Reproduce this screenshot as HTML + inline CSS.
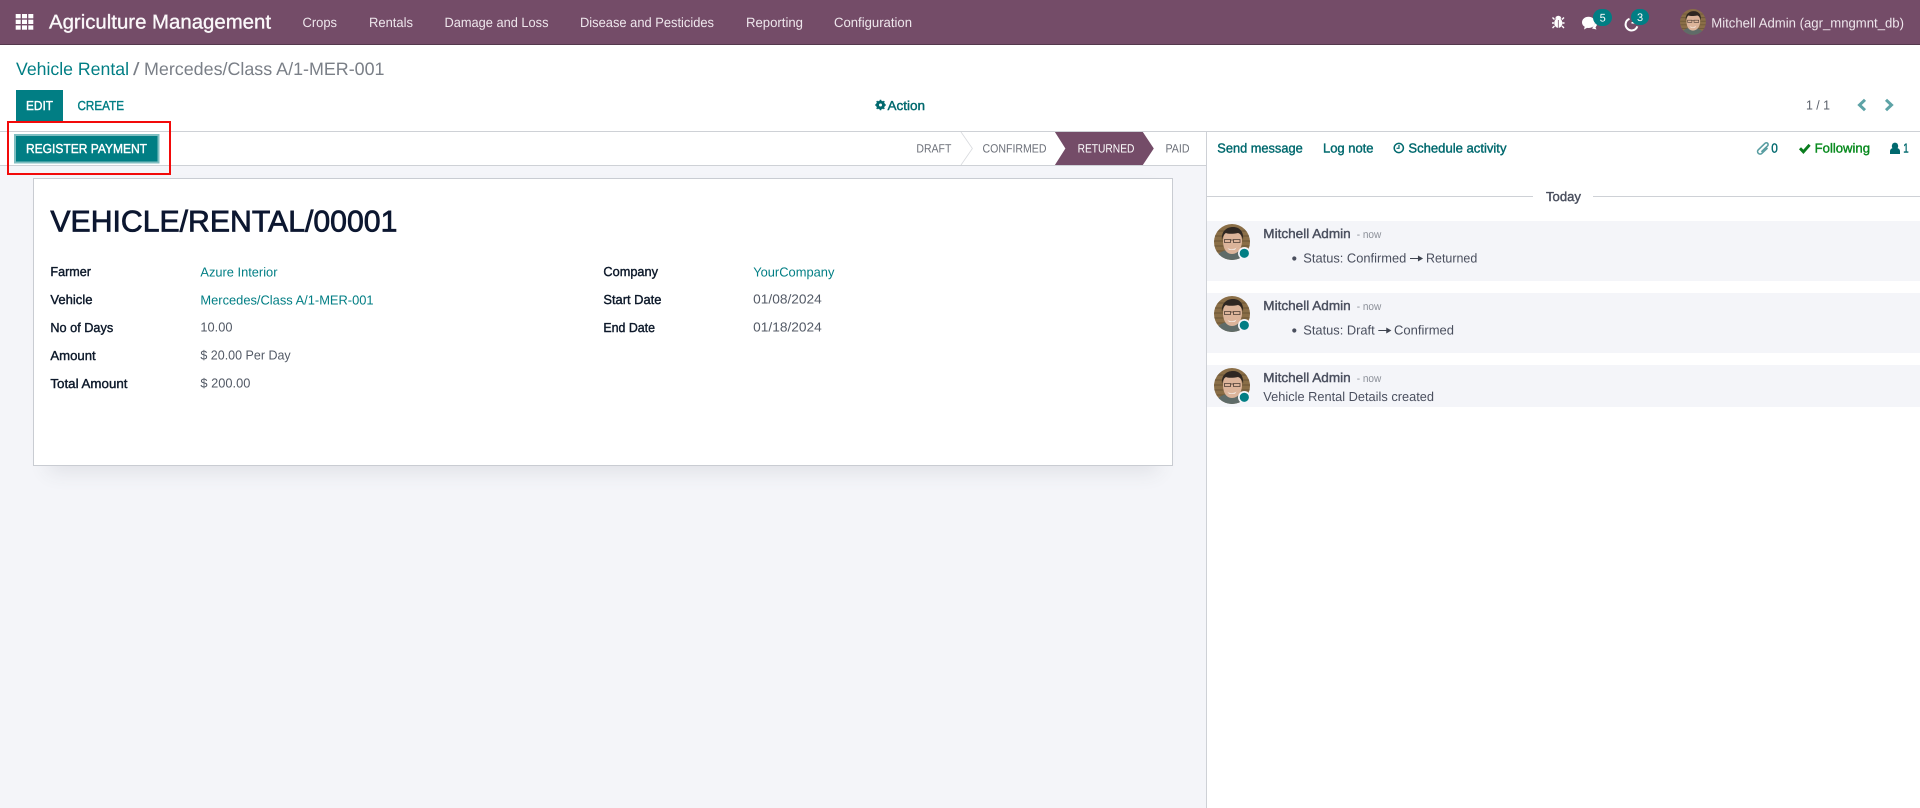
<!DOCTYPE html>
<html lang="en">
<head>
<meta charset="utf-8">
<title>Vehicle Rental - Mercedes/Class A/1-MER-001</title>
<style>
html,body{margin:0;padding:0;width:1920px;height:808px;overflow:hidden;background:#f4f5f9}
svg{display:block;position:absolute;left:0;top:0}
text{font-family:"Liberation Sans",Arial,sans-serif;font-size:13px;text-rendering:geometricPrecision}
.nav{font-size:13.5px;fill:#eee6ec}
.tb{font-size:13px;fill:#017e84;stroke:#017e84;stroke-width:.4}
.st{font-size:12px;fill:#6c7079}
.lb{font-size:13px;fill:#0e1a2b;stroke:#0e1a2b;stroke-width:.4}
.vl{font-size:13px;fill:#535a66}
.lk{font-size:13px;fill:#017e84}
.ch{font-size:13px;fill:#00696e;stroke:#00696e;stroke-width:.4}
.nm{font-size:13px;fill:#4a4f5e;stroke:#4a4f5e;stroke-width:.4}
.nw{font-size:11px;fill:#8b8f98}
.ms{font-size:13px;fill:#4a4f5e}
.wh{font-size:13px;fill:#fff;stroke:#fff;stroke-width:.4}
</style>
</head>
<body>
<svg width="1920" height="808" viewBox="0 0 1920 808" xmlns="http://www.w3.org/2000/svg">
<defs>
<clipPath id="cp"><circle cx="18" cy="18" r="18"/></clipPath>
<g id="av">
  <g clip-path="url(#cp)">
    <rect width="36" height="36" fill="#8a6e47"/>
    <path d="M0 7h36M0 12h36M0 17h36M0 22h36M0 27h36" stroke="#705a38" stroke-width="1.300"/>
    <path d="M2 36c1-7 6-10 15-10s15 3 16 10z" fill="#5f6b68"/>
    <path d="M9 17c0-7 3-11 9-11s10 4 10 11c0 7-4 13-10 13S9 24 9 17z" fill="#dcb49a"/>
    <path d="M8 16c-1-8 4-13 11-13s11 5 10 13c-1-4-2-6-5-7-5 1-10 1-12 0-2 1-3 3-4 7z" fill="#2f2722"/>
    <path d="M10.500 15.500h6v3h-6zM19.500 15.500h6.500v3h-6.500z" fill="none" stroke="#4b3c34" stroke-width=".8"/>
    <path d="M16.500 16h3" stroke="#4b3c34" stroke-width=".8"/>
    <path d="M13 23.500c2 2.200 7 2.200 9.500 0l-1.500 2.300h-6z" fill="#f6efe9"/>
  </g>
</g>
<g id="pres">
  <circle cx="30.300" cy="29.300" r="6.300" fill="#f4f5f9"/>
  <circle cx="30.300" cy="29.300" r="4.600" fill="#017e84"/>
</g>
<filter id="sh" x="-5%" y="-10%" width="110%" height="125%"><feGaussianBlur stdDeviation="10"/></filter>
</defs>

<!-- page surfaces -->
<rect width="1920" height="808" fill="#f4f5f9"/>
<rect y="45" width="1920" height="86" fill="#fff"/>
<rect y="131" width="1206" height="34" fill="#fff"/>
<rect x="1206" y="131" width="714" height="677" fill="#fff"/>

<!-- top bar -->
<rect width="1920" height="45" fill="#744c68"/>
<rect y="44" width="1920" height="1" fill="#54384c"/>
<g fill="#fff">
  <rect x="15.700" y="14" width="5" height="4.300"/><rect x="22" y="14" width="5" height="4.300"/><rect x="28.300" y="14" width="5" height="4.300"/>
  <rect x="15.700" y="19.700" width="5" height="4.300"/><rect x="22" y="19.700" width="5" height="4.300"/><rect x="28.300" y="19.700" width="5" height="4.300"/>
  <rect x="15.700" y="25.400" width="5" height="4.300"/><rect x="22" y="25.400" width="5" height="4.300"/><rect x="28.300" y="25.400" width="5" height="4.300"/>
</g>
<text x="49" y="28.700" textLength="222" lengthAdjust="spacingAndGlyphs" style="font-size:20px;stroke:#fbf8fa;stroke-width:.35" fill="#fbf8fa">Agriculture Management</text>
<text class="nav" x="302.500" y="27" textLength="34.500" lengthAdjust="spacingAndGlyphs">Crops</text>
<text class="nav" x="369" y="27" textLength="44" lengthAdjust="spacingAndGlyphs">Rentals</text>
<text class="nav" x="444.500" y="27" textLength="104" lengthAdjust="spacingAndGlyphs">Damage and Loss</text>
<text class="nav" x="580" y="27" textLength="134" lengthAdjust="spacingAndGlyphs">Disease and Pesticides</text>
<text class="nav" x="746" y="27" textLength="57" lengthAdjust="spacingAndGlyphs">Reporting</text>
<text class="nav" x="834" y="27" textLength="78" lengthAdjust="spacingAndGlyphs">Configuration</text>

<!-- systray -->
<g fill="#fff">
  <ellipse cx="1558.300" cy="23" rx="4.100" ry="5"/>
  <path d="M1555.300 18.800a3 3 0 0 1 6 0z"/>
  <path d="M1554.500 19.500l-2-2M1562 19.500l2-2M1554 23h-2M1562.500 23h2M1554.500 26l-2 2M1562 26l2 2" stroke="#fff" stroke-width="1.400" fill="none"/>
</g>
<path d="M1558.300 20v8" stroke="#744c68" stroke-width=".8"/>
<path d="M1582 22.500c0-3.500 3-5.800 6.500-5.800s6.500 2.300 6.500 5.800-3 5.500-6.500 5.500l-1.500-.1-3 1.600.7-2.700c-1.600-1-2.700-2.500-2.700-4.300z" fill="#fff"/>
<path d="M1592 28.500l4.500 1-1-2 1.500-2.500-1.500-2z" fill="#fff"/>
<rect x="1593" y="9" width="19" height="17" rx="8.500" fill="#017e84"/>
<text x="1602.700" y="21.300" text-anchor="middle" style="font-size:11px" fill="#fff">5</text>
<path d="M1629.500 18.800a6 6 0 1 0 7.800 7.500" fill="none" stroke="#fff" stroke-width="2"/>
<path d="M1631.500 22.800h4" stroke="#fff" stroke-width="1.600"/>
<rect x="1631" y="9" width="18" height="16" rx="8" fill="#017e84"/>
<text x="1640" y="20.800" text-anchor="middle" style="font-size:11px" fill="#fff">3</text>
<use href="#av" transform="translate(1680 9) scale(.72)"/>
<text class="nav" x="1711.300" y="27.300" textLength="192.700" lengthAdjust="spacingAndGlyphs">Mitchell Admin (agr_mngmnt_db)</text>

<!-- breadcrumb -->
<text x="16" y="75" textLength="113" lengthAdjust="spacingAndGlyphs" style="font-size:18px" fill="#017e84">Vehicle Rental</text>
<text x="133" y="75" textLength="6.500" lengthAdjust="spacingAndGlyphs" style="font-size:18px" fill="#7a7f87">/</text>
<text x="144" y="75" textLength="240.500" lengthAdjust="spacingAndGlyphs" style="font-size:18px" fill="#7a7f87">Mercedes/Class A/1-MER-001</text>

<!-- control buttons -->
<rect x="16" y="90" width="47" height="31" fill="#017e84"/>
<text class="wh" x="26" y="110" textLength="27" lengthAdjust="spacingAndGlyphs">EDIT</text>
<text class="tb" x="77.500" y="110" textLength="46.500" lengthAdjust="spacingAndGlyphs">CREATE</text>

<!-- action -->
<g transform="translate(880.500 105)">
  <circle r="3.200" fill="none" stroke="#00696e" stroke-width="2.600"/>
  <path d="M0-5.300V5.300M-5.300 0H5.300M-3.800-3.800L3.800 3.800M3.800-3.800L-3.800 3.800" stroke="#00696e" stroke-width="1.500"/>
  <circle r="1.500" fill="#fff"/>
</g>
<text class="ch" x="887.500" y="110" textLength="37.500" lengthAdjust="spacingAndGlyphs">Action</text>

<!-- pager -->
<text x="1806" y="109.300" textLength="24" lengthAdjust="spacingAndGlyphs" style="font-size:13px" fill="#5b616b">1 / 1</text>
<path d="M1865 99.800l-5.500 5.200 5.500 5.200M1886 99.800l5.500 5.200-5.500 5.200" fill="none" stroke="#5da3a6" stroke-width="3"/>

<!-- status bar lines -->
<rect y="131" width="1920" height="1" fill="#ced1d6"/>
<rect y="165" width="1206" height="1" fill="#ced1d6"/>
<rect x="1206" y="131" width="1" height="677" fill="#ced1d6"/>

<!-- register payment -->
<rect x="15" y="135" width="143.500" height="27.500" fill="#017e84" stroke="#7fbec1" stroke-width="2"/>
<text class="wh" x="26" y="153" textLength="121" lengthAdjust="spacingAndGlyphs">REGISTER PAYMENT</text>

<!-- status -->
<text class="st" x="916.400" y="152.300" textLength="35" lengthAdjust="spacingAndGlyphs">DRAFT</text>
<path d="M961 132l11.400 16.500L961 165" fill="none" stroke="#d8dade" stroke-width=".8"/>
<text class="st" x="982.500" y="152.300" textLength="64" lengthAdjust="spacingAndGlyphs">CONFIRMED</text>
<path d="M1054.900 132H1142.800L1153.800 148.500 1142.800 165H1054.900L1065.400 148.500z" fill="#744c68"/>
<text x="1077.600" y="152.300" textLength="56.800" lengthAdjust="spacingAndGlyphs" style="font-size:12px" fill="#fff">RETURNED</text>
<text class="st" x="1165.500" y="152.300" textLength="24" lengthAdjust="spacingAndGlyphs">PAID</text>

<!-- red highlight -->
<rect x="8" y="122" width="162" height="52" fill="none" stroke="#f20a0a" stroke-width="2"/>

<!-- sheet -->
<rect x="48" y="192" width="1110" height="280" fill="#3a3f50" opacity=".11" filter="url(#sh)"/>
<rect x="33.500" y="178.500" width="1139" height="287" fill="#fff" stroke="#c9ccd2"/>
<text x="50.400" y="231.300" textLength="347" lengthAdjust="spacingAndGlyphs" style="font-size:30px;stroke:#0c1730;stroke-width:.75" fill="#0c1730">VEHICLE/RENTAL/00001</text>

<text class="lb" x="50.400" y="276" textLength="40.600" lengthAdjust="spacingAndGlyphs">Farmer</text>
<text class="lb" x="50.400" y="304" textLength="42.100" lengthAdjust="spacingAndGlyphs">Vehicle</text>
<text class="lb" x="50.400" y="332" textLength="62.800" lengthAdjust="spacingAndGlyphs">No of Days</text>
<text class="lb" x="50.400" y="360" textLength="45.300" lengthAdjust="spacingAndGlyphs">Amount</text>
<text class="lb" x="50.400" y="388" textLength="77.100" lengthAdjust="spacingAndGlyphs">Total Amount</text>

<text class="lk" x="200.400" y="276.700" textLength="77.100" lengthAdjust="spacingAndGlyphs">Azure Interior</text>
<text class="lk" x="200.400" y="304.700" textLength="173.200" lengthAdjust="spacingAndGlyphs">Mercedes/Class A/1-MER-001</text>
<text class="vl" x="200.400" y="331.500" textLength="32.100" lengthAdjust="spacingAndGlyphs">10.00</text>
<text class="vl" x="200.400" y="359.500" textLength="90.300" lengthAdjust="spacingAndGlyphs">$ 20.00 Per Day</text>
<text class="vl" x="200.400" y="387.500" textLength="50" lengthAdjust="spacingAndGlyphs">$ 200.00</text>

<text class="lb" x="603.400" y="276" textLength="54.600" lengthAdjust="spacingAndGlyphs">Company</text>
<text class="lb" x="603.400" y="304" textLength="58" lengthAdjust="spacingAndGlyphs">Start Date</text>
<text class="lb" x="603.400" y="332" textLength="51.600" lengthAdjust="spacingAndGlyphs">End Date</text>

<text class="lk" x="753.200" y="276.700" textLength="81.200" lengthAdjust="spacingAndGlyphs">YourCompany</text>
<text class="vl" x="753.200" y="303.500" textLength="68.600" lengthAdjust="spacingAndGlyphs">01/08/2024</text>
<text class="vl" x="753.200" y="331.500" textLength="68.600" lengthAdjust="spacingAndGlyphs">01/18/2024</text>

<!-- chatter topbar -->
<text class="ch" x="1217.300" y="152.300" textLength="85.400" lengthAdjust="spacingAndGlyphs">Send message</text>
<text class="ch" x="1323" y="152.300" textLength="50.500" lengthAdjust="spacingAndGlyphs">Log note</text>
<circle cx="1398.800" cy="148" r="4.600" fill="none" stroke="#00696e" stroke-width="1.500"/>
<path d="M1399 145v3.300h-2.500" fill="none" stroke="#00696e" stroke-width="1.200"/>
<text class="ch" x="1408.400" y="152.300" textLength="98.100" lengthAdjust="spacingAndGlyphs">Schedule activity</text>

<path d="M1767.500 148l-5.600 5.300a2.500 2.500 0 0 1-3.600-3.500l6.700-6.500a1.800 1.800 0 0 1 2.600 2.500l-6.200 6" fill="none" stroke="#5a9ea2" stroke-width="1.600"/>
<text class="ch" x="1771.300" y="152.500" textLength="6.600" lengthAdjust="spacingAndGlyphs">0</text>
<path d="M1800 148.200l3.400 3.600 6.200-7" fill="none" stroke="#0a7d1e" stroke-width="2.900"/>
<text x="1814.700" y="152.500" textLength="55.300" lengthAdjust="spacingAndGlyphs" style="font-size:13px;stroke:#088a1e;stroke-width:.4" fill="#088a1e">Following</text>
<ellipse cx="1895" cy="146" rx="3.200" ry="3.400" fill="#00696e"/>
<path d="M1890 154v-2.700c0-2 1.500-3 3-3.300h4c1.500.3 3 1.300 3 3.300v2.700z" fill="#00696e"/>
<text class="ch" x="1903.300" y="152.500" textLength="5.400" lengthAdjust="spacingAndGlyphs">1</text>

<!-- today separator -->
<rect x="1207" y="196" width="326" height="1" fill="#ced1d6"/>
<rect x="1593" y="196" width="327" height="1" fill="#ced1d6"/>
<text class="nm" x="1546" y="201" textLength="35" lengthAdjust="spacingAndGlyphs">Today</text>

<!-- message 1 -->
<rect x="1207" y="221" width="713" height="60" fill="#f4f5f9"/>
<use href="#av" x="1214" y="224"/><use href="#pres" x="1214" y="224"/>
<text class="nm" x="1263.300" y="238" textLength="87.400" lengthAdjust="spacingAndGlyphs">Mitchell Admin</text>
<text class="nw" x="1356.700" y="238" textLength="24.600" lengthAdjust="spacingAndGlyphs">- now</text>
<circle cx="1294.300" cy="258.500" r="2.100" fill="#4a4f5e"/>
<text class="ms" x="1303.300" y="262.600" textLength="103" lengthAdjust="spacingAndGlyphs">Status: Confirmed</text>
<path d="M1410 258.500h11M1418.500 256.500l3.500 2-3.500 2z" stroke="#3f4450" stroke-width="1.100" fill="#3f4450"/>
<text class="ms" x="1426" y="262.600" textLength="51.300" lengthAdjust="spacingAndGlyphs">Returned</text>

<!-- message 2 -->
<rect x="1207" y="293" width="713" height="60" fill="#f4f5f9"/>
<use href="#av" x="1214" y="296"/><use href="#pres" x="1214" y="296"/>
<text class="nm" x="1263.300" y="310" textLength="87.400" lengthAdjust="spacingAndGlyphs">Mitchell Admin</text>
<text class="nw" x="1356.700" y="310" textLength="24.600" lengthAdjust="spacingAndGlyphs">- now</text>
<circle cx="1294.300" cy="330.500" r="2.100" fill="#4a4f5e"/>
<text class="ms" x="1303.300" y="334.600" textLength="71.400" lengthAdjust="spacingAndGlyphs">Status: Draft</text>
<path d="M1378.300 330.500h11M1386.800 328.500l3.500 2-3.500 2z" stroke="#3f4450" stroke-width="1.100" fill="#3f4450"/>
<text class="ms" x="1394" y="334.600" textLength="60" lengthAdjust="spacingAndGlyphs">Confirmed</text>

<!-- message 3 -->
<rect x="1207" y="365" width="713" height="42" fill="#f4f5f9"/>
<use href="#av" x="1214" y="368"/><use href="#pres" x="1214" y="368"/>
<text class="nm" x="1263.300" y="382" textLength="87.400" lengthAdjust="spacingAndGlyphs">Mitchell Admin</text>
<text class="nw" x="1356.700" y="382" textLength="24.600" lengthAdjust="spacingAndGlyphs">- now</text>
<text class="ms" x="1263.300" y="400.800" textLength="170.700" lengthAdjust="spacingAndGlyphs">Vehicle Rental Details created</text>
</svg>
</body>
</html>
